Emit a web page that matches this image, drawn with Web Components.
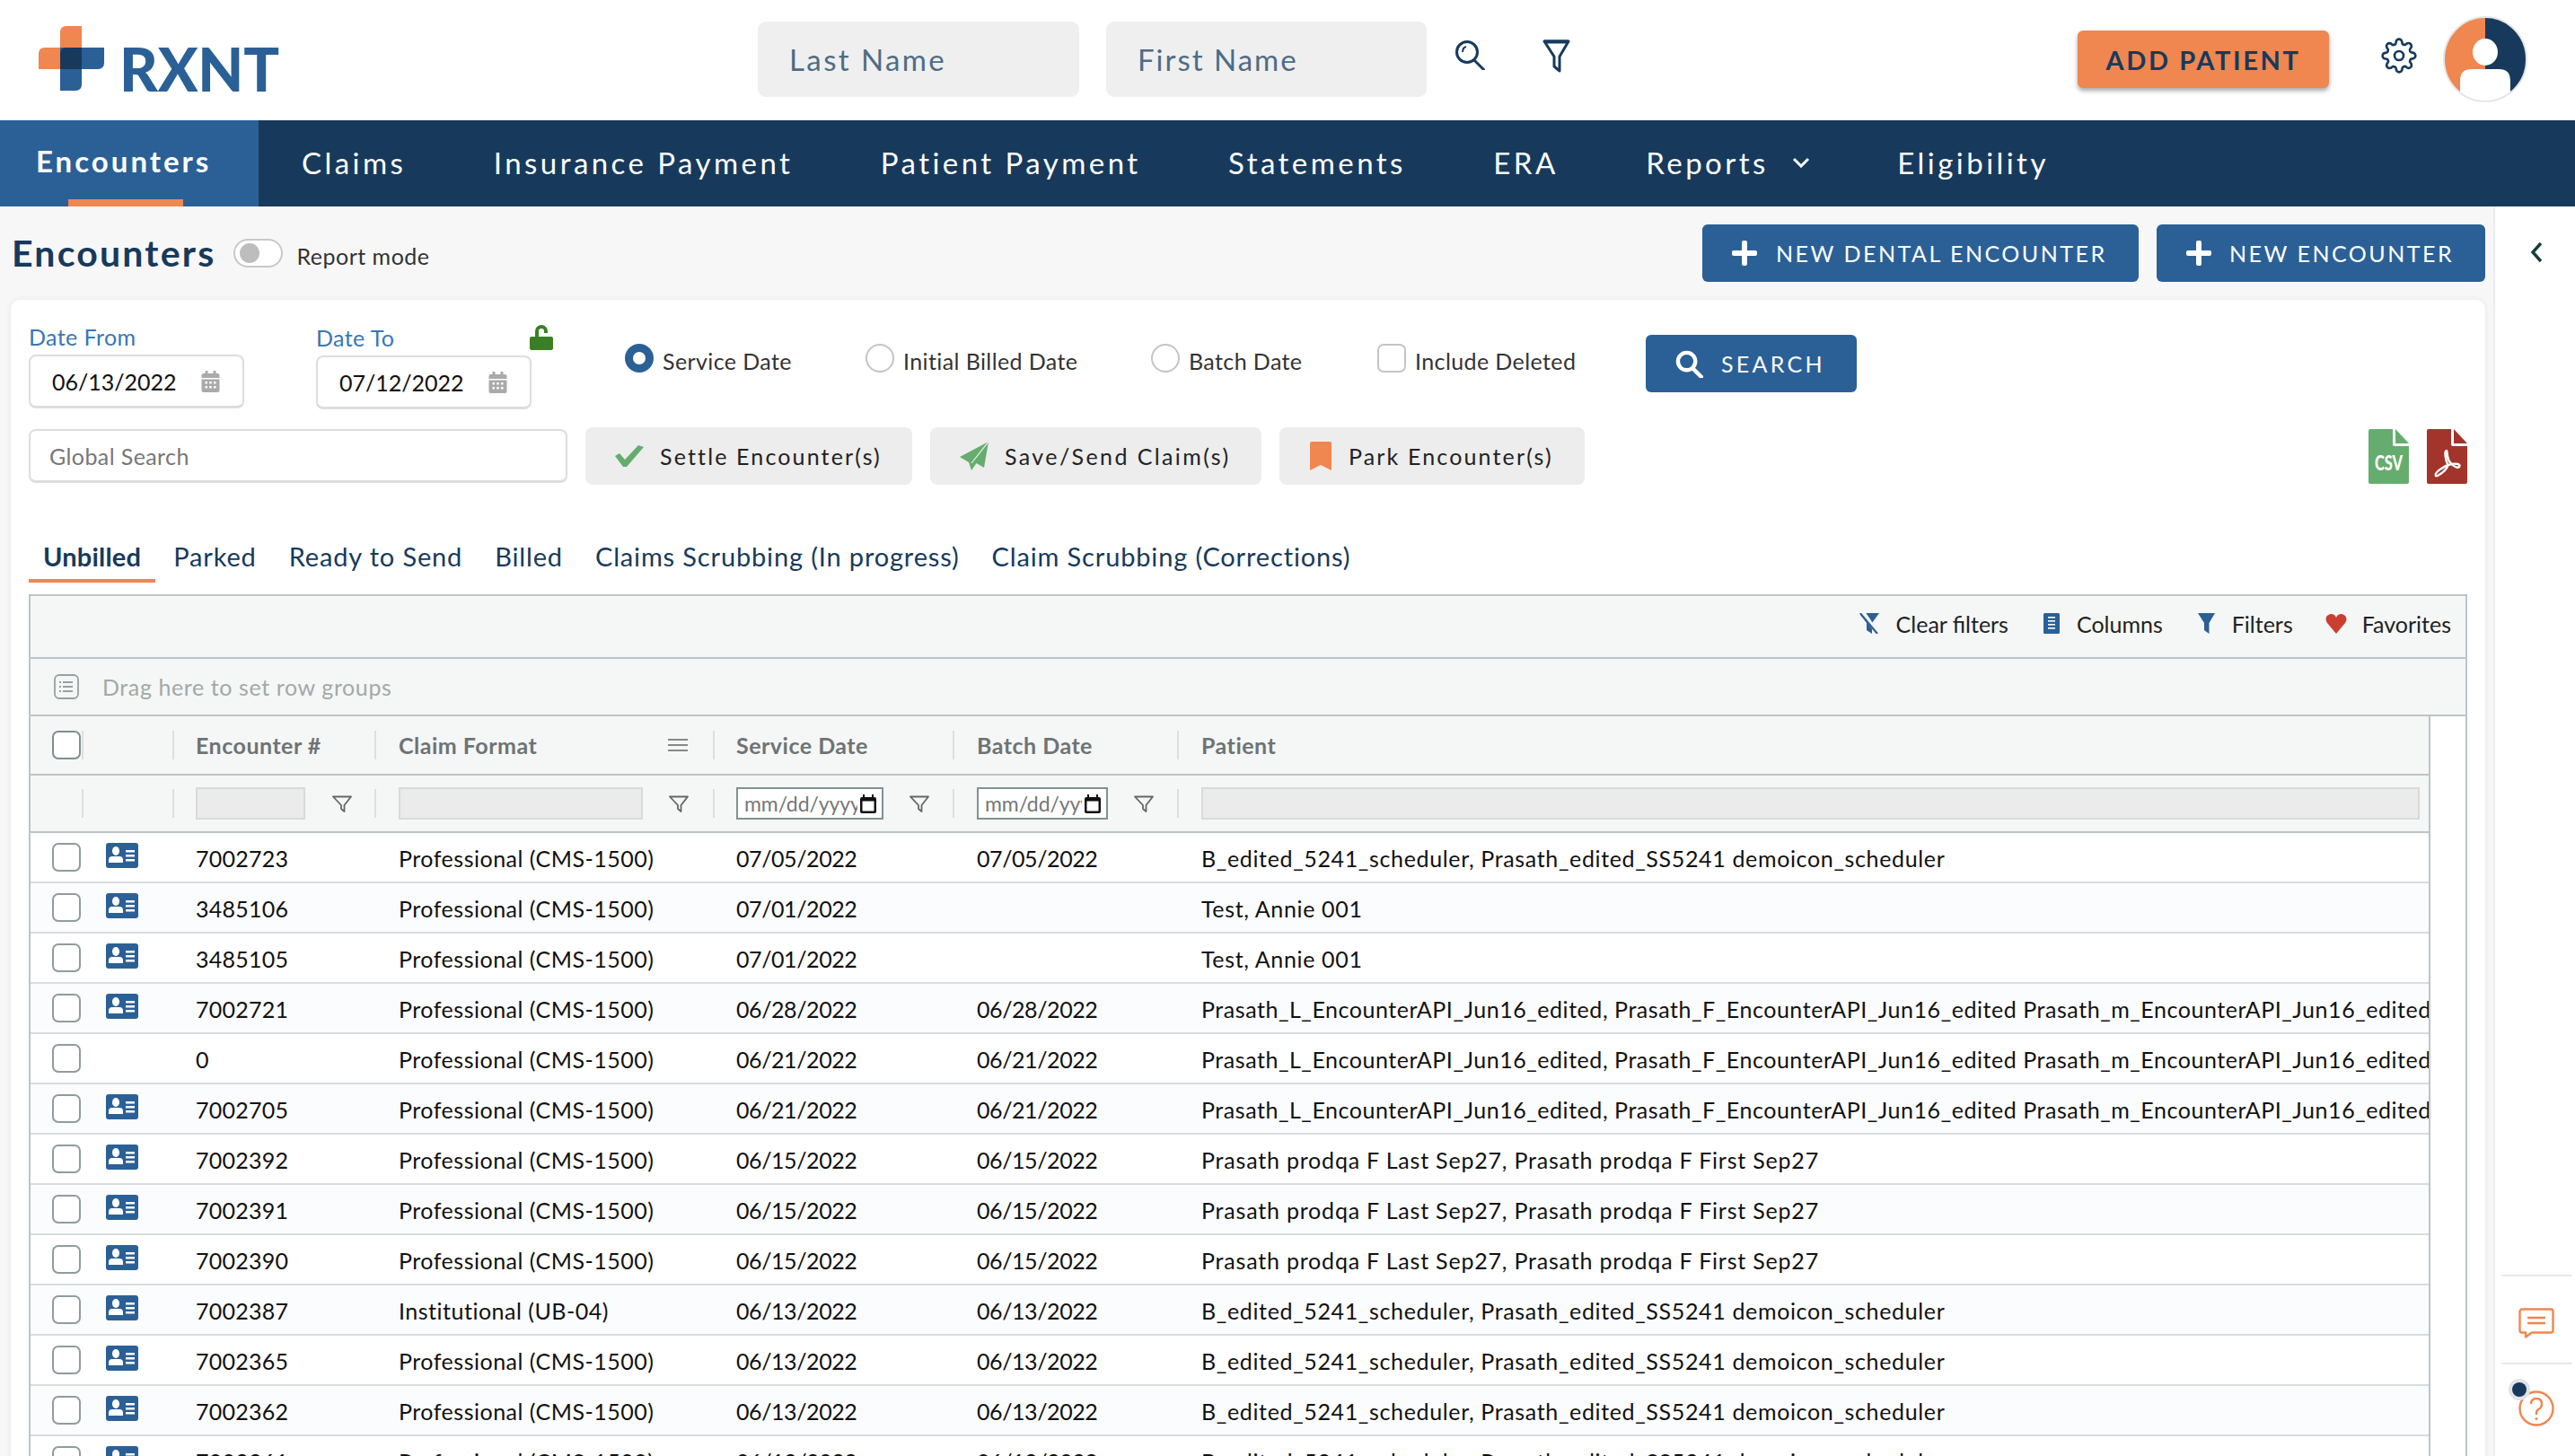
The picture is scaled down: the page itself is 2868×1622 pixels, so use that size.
<!DOCTYPE html>
<html lang="en">
<head>
<meta charset="utf-8">
<title>RXNT Encounters</title>
<style>
  html, body { margin: 0; height: 1622px; overflow: hidden; background: #f7f7f7; }
  body { font-family: Lato, "Noto Sans", sans-serif; color: #111; }
</style>
</head>
<body>
<rx-app></rx-app>
<script>
const NAVY = "#173a5c", BLUE = "#2b6097", ORANGE = "#f08650", GREEN = "#65ad6e";

const ICONS = {
  logo: `<svg viewBox="0 0 73 72"><path fill="${ORANGE}" d="M24 24V7q0-7 7-7h17v48H0V31q0-7 7-7z"/><path fill="${BLUE}" d="M24 24h49v17q0 7-7 7H48v17q0 7-7 7H24z"/><path fill="${NAVY}" d="M31 24h17v24H24V31q0-7 7-7z"/></svg>`,
  search: `<svg viewBox="0 0 34 34" fill="none" stroke="${NAVY}" stroke-width="3"><circle cx="14" cy="14" r="11.5"/><path d="M22 23l11 11" stroke-linecap="round"/><path d="M9 14q0-5 4-6" stroke-width="2"/></svg>`,
  funnel: `<svg viewBox="0 0 31 37" fill="none" stroke="${NAVY}" stroke-width="3" stroke-linejoin="round"><path d="M2 2h27L19 19v16l-6-5V19z"/><path d="M2 2.5h27" stroke-width="4"/></svg>`,
  gear: `<svg viewBox="0 0 24 24" fill="none" stroke="${NAVY}" stroke-width="1.6"><circle cx="12" cy="12" r="3"/><path d="M19.4 15a1.65 1.65 0 0 0 .33 1.82l.06.06a2 2 0 0 1 0 2.83 2 2 0 0 1-2.83 0l-.06-.06a1.65 1.65 0 0 0-1.82-.33 1.65 1.65 0 0 0-1 1.51V21a2 2 0 0 1-2 2 2 2 0 0 1-2-2v-.09A1.65 1.65 0 0 0 9 19.4a1.65 1.65 0 0 0-1.82.33l-.06.06a2 2 0 0 1-2.83 0 2 2 0 0 1 0-2.83l.06-.06a1.65 1.65 0 0 0 .33-1.82 1.65 1.65 0 0 0-1.51-1H3a2 2 0 0 1-2-2 2 2 0 0 1 2-2h.09A1.65 1.65 0 0 0 4.6 9a1.65 1.65 0 0 0-.33-1.82l-.06-.06a2 2 0 0 1 0-2.83 2 2 0 0 1 2.83 0l.06.06a1.65 1.65 0 0 0 1.82.33H9a1.65 1.65 0 0 0 1-1.51V3a2 2 0 0 1 2-2 2 2 0 0 1 2 2v.09a1.65 1.65 0 0 0 1 1.51 1.65 1.65 0 0 0 1.82-.33l.06-.06a2 2 0 0 1 2.83 0 2 2 0 0 1 0 2.83l-.06.06a1.65 1.65 0 0 0-.33 1.82V9a1.65 1.65 0 0 0 1.51 1H21a2 2 0 0 1 2 2 2 2 0 0 1-2 2h-.09a1.65 1.65 0 0 0-1.51 1z"/></svg>`,
  avatar: `<svg viewBox="0 0 94 96"><defs><clipPath id="c"><ellipse cx="47" cy="48" rx="46" ry="47"/></clipPath></defs><g clip-path="url(#c)"><rect width="47" height="96" fill="${ORANGE}"/><rect x="47" width="47" height="96" fill="${NAVY}"/><ellipse cx="47" cy="40" rx="14" ry="15" fill="#fff"/><path d="M19 96V72q0-13 13-13h30q13 0 13 13v24z" fill="#fff"/></g><ellipse cx="47" cy="48" rx="46" ry="47" fill="none" stroke="#e6e6e6" stroke-width="2"/></svg>`,
  plus: `<svg viewBox="0 0 28 28" fill="#fff"><rect x="11" y="0" width="6" height="28" rx="2"/><rect x="0" y="11" width="28" height="6" rx="2"/></svg>`,
  chevdown: `<svg viewBox="0 0 20 12" fill="none" stroke="#fff" stroke-width="3"><path d="M2 2l8 8 8-8"/></svg>`,
  chevleft: `<svg viewBox="0 0 14 24" fill="none" stroke="#123f3c" stroke-width="3.4"><path d="M12 2L3 12l9 10"/></svg>`,
  calendar: `<svg viewBox="0 0 20 24" fill="#aaa"><path d="M4 0h3v3h6V0h3v3h2a2 2 0 0 1 2 2v3H0V5a2 2 0 0 1 2-2h2z"/><path d="M0 9.500h20V22a2 2 0 0 1-2 2H2a2 2 0 0 1-2-2z"/><g fill="#fff"><rect x="4" y="12" width="2.500" height="2.500"/><rect x="8.700" y="12" width="2.500" height="2.500"/><rect x="13.500" y="12" width="2.500" height="2.500"/><rect x="4" y="17" width="2.500" height="2.500"/><rect x="8.700" y="17" width="2.500" height="2.500"/><rect x="13.500" y="17" width="2.500" height="2.500"/></g></svg>`,
  lock: `<svg viewBox="0 0 26 28" fill="#3b7f25"><path d="M2 13h22a2 2 0 0 1 2 2v11a2 2 0 0 1-2 2H2a2 2 0 0 1-2-2V15a2 2 0 0 1 2-2z"/><path d="M6 14V7a7 7 0 0 1 14 0v2h-4V7a3 3 0 0 0-6 0v7z"/></svg>`,
  check: `<svg viewBox="0 0 32 24" fill="${GREEN}"><path d="M0 12l5-3 6 7L26 0l6 2-19 22h-4z"/></svg>`,
  plane: `<svg viewBox="0 0 32 32" fill="${GREEN}"><path d="M32 0L27 29 18.500 24 13 32 10 23 0 17z"/><path d="M32 0L13 24" stroke="#ededed" stroke-width="1.200"/></svg>`,
  bookmark: `<svg viewBox="0 0 24 32" fill="${ORANGE}"><path d="M2 0h20a2 2 0 0 1 2 2v30l-12-6-12 6V2a2 2 0 0 1 2-2z"/></svg>`,
  searchw: `<svg viewBox="0 0 32 32" fill="none" stroke="#fff" stroke-width="4.500"><circle cx="13" cy="13" r="10"/><path d="M20 21l10 10" stroke-linecap="round"/></svg>`,
  csv: `<svg viewBox="0 0 45 61"><path fill="${GREEN}" d="M2 0h25v17q0 2 2 2h16v40a2 2 0 0 1-2 2H2a2 2 0 0 1-2-2V2a2 2 0 0 1 2-2z"/><path fill="${GREEN}" d="M30 0l15 16H30z"/><text x="22.500" y="46" text-anchor="middle" font-family="Lato, sans-serif" font-weight="900" font-size="22" fill="#fff" textLength="31" lengthAdjust="spacingAndGlyphs">CSV</text></svg>`,
  pdf: `<svg viewBox="0 0 45 61"><path fill="#a2342c" d="M2 0h25v17q0 2 2 2h16v40a2 2 0 0 1-2 2H2a2 2 0 0 1-2-2V2a2 2 0 0 1 2-2z"/><path fill="#a2342c" d="M30 0l15 16H30z"/><path fill="none" stroke="#fff" stroke-width="2.400" d="M22 24c-3 0-1 11 1 15 2 5-12 15-13 13-2-3 8-11 17-13 6-1 11 0 9 3-2 3-9-3-11-6-3-5-2-12-3-12z"/></svg>`,
  card: `<svg viewBox="0 0 36 28"><rect width="36" height="28" rx="3" fill="${BLUE}"/><ellipse cx="11" cy="9" rx="4" ry="5" fill="#fff"/><path d="M3 22v-3q0-4 4-4h8q4 0 4 4v3z" fill="#fff"/><g fill="#fff"><rect x="22" y="8" width="10" height="2.500"/><rect x="22" y="13" width="10" height="2.500"/><rect x="22" y="18" width="10" height="2.500"/></g></svg>`,
  clearf: `<svg viewBox="0 0 22 23"><path fill="${BLUE}" d="M0 0h22l-8 11v12l-6-4v-8z"/><path d="M4 -1l17 25" stroke="#f4f7f6" stroke-width="4.500" fill="none"/><path d="M1.500 1L20 23" stroke="${BLUE}" stroke-width="2.200" fill="none"/></svg>`,
  columns: `<svg viewBox="0 0 18 23"><rect width="18" height="23" rx="1.500" fill="${BLUE}"/><g fill="#fff"><rect x="5" y="4" width="8" height="1.600"/><rect x="5" y="8" width="8" height="1.600"/><rect x="5" y="12" width="8" height="1.600"/><rect x="5" y="16" width="8" height="1.600"/></g></svg>`,
  filter: `<svg viewBox="0 0 19 23" fill="${BLUE}"><path d="M0 0h19L12.500 11v12L7 19v-8z"/></svg>`,
  heart: `<svg viewBox="0 0 24 22" fill="#c94033"><path d="M12 22L2 10C-2 4 3 0 6.500 0 9 0 11 1.500 12 4c1-2.500 3-4 5.500-4C21 0 26 4 22 10z"/></svg>`,
  groups: `<svg viewBox="0 0 28 28" fill="none" stroke="#9a9fa0" stroke-width="1.800"><rect x="1" y="1" width="26" height="26" rx="5"/><path d="M10 9h11M10 14h11M10 19h11"/><path d="M6 9h2M6 14h2M6 19h2"/></svg>`,
  menu: `<svg viewBox="0 0 22 14" fill="#888"><rect width="22" height="2"/><rect y="6" width="22" height="2"/><rect y="12" width="22" height="2"/></svg>`,
  ffunnel: `<svg viewBox="0 0 22 19" fill="none" stroke="#666" stroke-width="1.800" stroke-linejoin="round"><path d="M1 1.500h20L13.500 11v7L10 15v-4z"/></svg>`,
  dcal: `<svg viewBox="0 0 18 21"><path d="M3 0h2v3h8V0h2v3h1a2 2 0 0 1 2 2v14a2 2 0 0 1-2 2H2a2 2 0 0 1-2-2V5a2 2 0 0 1 2-2h1z" fill="#111"/><rect x="2.500" y="7.500" width="13" height="11" fill="#fff"/></svg>`,
  chat: `<svg viewBox="0 0 40 34" fill="none" stroke="${ORANGE}" stroke-width="2.400" stroke-linejoin="round"><path d="M4 1.500h32a2.500 2.500 0 0 1 2.500 2.500v21a2.500 2.500 0 0 1-2.500 2.500H15l-7 5v-5H4A2.500 2.500 0 0 1 1.500 25V4A2.500 2.500 0 0 1 4 1.500z"/><path d="M10 11h20M10 17h20"/></svg>`,
  help: `<svg viewBox="0 0 40 40" fill="none" stroke="${ORANGE}" stroke-width="2.400"><circle cx="20" cy="20" r="18.500"/><path d="M14 15q0-6 6-6t6 6q0 4-3 5.500T20 25v2"/><circle cx="20" cy="31.500" r="1.500" fill="${ORANGE}" stroke="none"/></svg>`
};

class RxIcon extends HTMLElement {
  connectedCallback() {
    const w = this.getAttribute("w") || 24, h = this.getAttribute("h") || w;
    this.attachShadow({ mode: "open" }).innerHTML = `
      <style>
        :host { display: inline-block; flex: none; width: ${w}px; height: ${h}px; line-height: 0; }
        svg { width: 100%; height: 100%; display: block; }
      </style>${ICONS[this.getAttribute("name")] || ""}`;
  }
}
customElements.define("rx-icon", RxIcon);

class RxHeader extends HTMLElement {
  constructor() {
    super();
    this.attachShadow({ mode: "open" }).innerHTML = `
    <style>
      :host { display: flex; align-items: center; height: 134px; background: #fff; box-sizing: border-box; padding-left: 43px; }
      .logo { display: flex; align-items: flex-end; width: 801px; height: 72px; margin-top: -4px; }
      .word { font: 900 66px/48px Lato, sans-serif; height: 48px; color: ${BLUE}; margin-left: 17px; letter-spacing: -.2px; }
      .field { width: 358px; height: 84px; box-sizing: border-box; background: #efefef; border-radius: 9px; margin-right: 30px;
        display: flex; align-items: center; padding-left: 35px; color: #4e6c85; font-size: 33px; letter-spacing: 2.400px; margin-top: -2px; }
      .search { margin: -12px 0 0 1px; }
      .funnel { margin: -9px 0 0 64px; }
      .add { margin-left: 565px; width: 280px; height: 64px; border-radius: 6px; background: ${ORANGE}; color: ${NAVY}; font-weight: 700; font-size: 29px; letter-spacing: 2.600px;
        display: flex; align-items: center; justify-content: center; box-shadow: 0 3px 5px rgba(0,0,0,.35); margin-top: -2px; }
      .gear { margin: -10px 0 0 58px; }
      .avatar { margin: -2px 0 0 29px; }
    </style>
    <div class="logo"><rx-icon name="logo" w="73" h="72"></rx-icon><span class="word">RXNT</span></div>
    <div class="field">Last Name</div>
    <div class="field" style="margin-right:0;width:357px;letter-spacing:2px">First Name</div>
    <div style="width:30px"></div>
    <rx-icon class="search" name="search" w="34"></rx-icon>
    <rx-icon class="funnel" name="funnel" w="31" h="37"></rx-icon>
    <div class="add">ADD PATIENT</div>
    <rx-icon class="gear" name="gear" w="40" h="42"></rx-icon>
    <rx-icon class="avatar" name="avatar" w="94" h="96"></rx-icon>`;
  }
}
customElements.define("rx-header", RxHeader);

class RxNav extends HTMLElement {
  constructor() {
    super();
    const items = ["Claims", "Insurance Payment", "Patient Payment", "Statements", "ERA", "Reports", "Eligibility"];
    this.attachShadow({ mode: "open" }).innerHTML = `
    <style>
      :host { display: flex; height: 96px; background: ${NAVY}; color: #fff; font-size: 33px; letter-spacing: 3.450px; }
      .on { width: 288px; box-sizing: border-box; padding-left: 40px; background: ${BLUE}; display: flex; flex-direction: column; justify-content: flex-end; font-weight: 700; letter-spacing: 3.000px; }
      .on span { margin-bottom: 20px; line-height: 44px; }
      .on i { display: block; width: 128px; height: 8px; margin: 1px 0 0 36px; background: ${ORANGE}; }
      .items { display: flex; align-items: center; gap: 97.500px; padding: 0 0 2px 48px; }
      .item { display: flex; align-items: center; gap: 26px; }
    </style>
    <div class="on"><span>Encounters</span><i></i></div>
    <div class="items">${items.map(t => `<div class="item">${t}${t === "Reports" ? '<rx-icon name="chevdown" w="20" h="12"></rx-icon>' : ""}</div>`).join("")}</div>`;
  }
}
customElements.define("rx-nav", RxNav);

class RxSidebar extends HTMLElement {
  constructor() {
    super();
    this.attachShadow({ mode: "open" }).innerHTML = `
    <style>
      :host { display: flex; flex-direction: column; align-items: center; background: #fff; border-left: 2px solid #ececec; box-sizing: border-box; width: 91px; height: 1392px; padding-left: 3px; }
      .top { height: 1190px; padding-top: 39px; box-sizing: border-box; }
      .cell { width: 78px; border-top: 2px solid #e8e8e8; display: flex; justify-content: center; box-sizing: border-box; position: relative; }
      .dot { position: absolute; left: 12px; top: 20px; width: 16px; height: 16px; border-radius: 50%; background: ${NAVY}; box-shadow: 0 0 0 4px #dfe3e8; }
    </style>
    <div class="top"><rx-icon name="chevleft" w="14" h="24"></rx-icon></div>
    <div class="cell" style="height:98px;padding-top:35px"><rx-icon name="chat" w="40" h="34"></rx-icon></div>
    <div class="cell" style="height:100px;padding-top:29px"><rx-icon name="help" w="40" h="40"></rx-icon><span class="dot"></span></div>`;
  }
}
customElements.define("rx-sidebar", RxSidebar);

class EncTitle extends HTMLElement {
  constructor() {
    super();
    this.attachShadow({ mode: "open" }).innerHTML = `
    <style>
      :host { display: flex; align-items: center; height: 104px; padding: 0 9px 0 13px; box-sizing: border-box; }
      h1 { margin: -2px 0 0; font-size: 41px; font-weight: 700; color: ${NAVY}; letter-spacing: 2.200px; }
      .toggle { width: 55px; height: 32px; box-sizing: border-box; margin-left: 20px; border: 2px solid #c8c8c8; border-radius: 16px; background: #fff; padding: 3px 5px; }
      .toggle i { display: block; width: 22px; height: 22px; border-radius: 50%; background: #bdbdbd; }
      .mode { margin: 6px 0 0 15px; font-size: 25px; color: #333; letter-spacing: .5px; }
      .btn { height: 64px; box-sizing: border-box; border-radius: 6px; background: ${BLUE}; color: #fff; display: flex; align-items: center; font-size: 25px; letter-spacing: 2.500px; }
    </style>
    <h1>Encounters</h1>
    <div class="toggle"><i></i></div>
    <div class="mode">Report mode</div>
    <div class="btn" style="margin-left:auto;width:486px;padding-left:33px;gap:21px"><rx-icon name="plus" w="28"></rx-icon>NEW DENTAL ENCOUNTER</div>
    <div class="btn" style="margin-left:20px;width:366px;padding-left:33px;gap:20px"><rx-icon name="plus" w="28"></rx-icon>NEW ENCOUNTER</div>`;
  }
}
customElements.define("enc-title", EncTitle);

class EncFilters extends HTMLElement {
  constructor() {
    super();
    const opts = [["Service Date", 268, "on"], ["Initial Billed Date", 318, ""], ["Batch Date", 252, ""], ["Include Deleted", 299, "box"]];
    this.attachShadow({ mode: "open" }).innerHTML = `
    <style>
      :host { display: block; padding: 26px 20px 0; color: #333; }
      .row { display: flex; align-items: flex-start; }
      .date { width: 240px; margin-right: 80px; }
      .date.to { width: 264px; margin-right: 80px; padding-top: 1px; }
      .lab { display: flex; justify-content: space-between; height: 35px; box-sizing: border-box; padding-bottom: 6px; align-items: center; color: #3a76b5; font-size: 25px; letter-spacing: .4px; }
      .inp { width: 240px; height: 60px; box-sizing: border-box; border: 2px solid #ddd; border-bottom-width: 3px; border-radius: 8px; background: #fff; display: flex; align-items: center; justify-content: space-between; padding: 0 25px 0 24px; color: #111; font-size: 25px; }
      .opts { display: flex; margin-top: 23px; }
      .opt { display: flex; align-items: flex-start; gap: 10px; font-size: 25px; line-height: 38px; letter-spacing: .4px; }
      .mark { width: 32px; height: 32px; box-sizing: border-box; border: 2px solid #c4c4c4; border-radius: 50%; background: #fff; flex: none; }
      .mark.on { border: 9px solid ${BLUE}; }
      .mark.box { border-radius: 7px; }
      .search { width: 235px; height: 64px; box-sizing: border-box; margin-top: 13px; border-radius: 6px; background: ${BLUE}; color: #fff; display: flex; align-items: center; padding-left: 33px; gap: 20px; font-size: 25px; letter-spacing: 3.300px; }
      .row2 { margin-top: 20px; height: 64px; align-items: center; gap: 20px; }
      .global { width: 600px; height: 60px; box-sizing: border-box; border: 2px solid #ddd; border-bottom-width: 3px; border-radius: 8px; background: #fff; display: flex; align-items: center; padding-left: 21px; color: #777; font-size: 25px; letter-spacing: .4px; }
      .act { height: 64px; box-sizing: border-box; background: #ededed; border-radius: 8px; display: flex; align-items: center; font-size: 25px; letter-spacing: 2.150px; color: #222; }
      .docs { margin-left: auto; display: flex; gap: 20px; }
    </style>
    <div class="row">
      <div class="date"><div class="lab">Date From</div><div class="inp">06/13/2022<rx-icon name="calendar" w="21" h="24"></rx-icon></div></div>
      <div class="date to"><div class="lab"><span>Date To</span><rx-icon name="lock" w="26" h="28"></rx-icon></div><div class="inp">07/12/2022<rx-icon name="calendar" w="21" h="24"></rx-icon></div></div>
      <div class="opts">${opts.map(([t, w, c]) => `<div class="opt" style="width:${w}px"><span class="mark ${c}"></span>${t}</div>`).join("")}</div>
      <div class="search"><rx-icon name="searchw" w="31"></rx-icon>SEARCH</div>
    </div>
    <div class="row row2">
      <div class="global">Global Search</div>
      <div class="act" style="width:364px;padding-left:33px;gap:18px"><rx-icon name="check" w="32" h="24"></rx-icon>Settle Encounter(s)</div>
      <div class="act" style="width:369px;padding-left:33px;gap:18px;letter-spacing:2.400px"><rx-icon name="plane" w="32"></rx-icon>Save/Send Claim(s)</div>
      <div class="act" style="width:340px;padding-left:34px;gap:19px"><rx-icon name="bookmark" w="24" h="32"></rx-icon>Park Encounter(s)</div>
      <div class="docs"><rx-icon name="csv" w="45" h="61"></rx-icon><rx-icon name="pdf" w="45" h="61"></rx-icon></div>
    </div>`;
  }
}
customElements.define("enc-filters", EncFilters);

class EncTabs extends HTMLElement {
  constructor() {
    super();
    const tabs = ["Unbilled", "Parked", "Ready to Send", "Billed", "Claims Scrubbing (In progress)", "Claim Scrubbing (Corrections)"];
    this.attachShadow({ mode: "open" }).innerHTML = `
    <style>
      :host { display: flex; gap: 4px; padding: 61px 20px 0; height: 48px; color: ${NAVY}; font-size: 29px; letter-spacing: .85px; }
      .tab { padding: 0 16px; height: 48px; box-sizing: border-box; line-height: 38px; }
      .tab.on { font-weight: 700; letter-spacing: .2px; border-bottom: 4px solid ${ORANGE}; }
    </style>
    ${tabs.map((t, i) => `<div class="tab ${i ? "" : "on"}">${t}</div>`).join("")}`;
  }
}
customElements.define("enc-tabs", EncTabs);

const PROF = "Professional (CMS-1500)";
const SCHED = "B_edited_5241_scheduler, Prasath_edited_SS5241 demoicon_scheduler";
const API = "Prasath_L_EncounterAPI_Jun16_edited, Prasath_F_EncounterAPI_Jun16_edited Prasath_m_EncounterAPI_Jun16_edited";
const PRODQA = "Prasath prodqa F Last Sep27, Prasath prodqa F First Sep27";
const ROWS = [
  ["7002723", PROF, "07/05/2022", "07/05/2022", SCHED],
  ["3485106", PROF, "07/01/2022", "", "Test, Annie 001"],
  ["3485105", PROF, "07/01/2022", "", "Test, Annie 001"],
  ["7002721", PROF, "06/28/2022", "06/28/2022", API],
  ["0", PROF, "06/21/2022", "06/21/2022", API],
  ["7002705", PROF, "06/21/2022", "06/21/2022", API],
  ["7002392", PROF, "06/15/2022", "06/15/2022", PRODQA],
  ["7002391", PROF, "06/15/2022", "06/15/2022", PRODQA],
  ["7002390", PROF, "06/15/2022", "06/15/2022", PRODQA],
  ["7002387", "Institutional (UB-04)", "06/13/2022", "06/13/2022", SCHED],
  ["7002365", PROF, "06/13/2022", "06/13/2022", SCHED],
  ["7002362", PROF, "06/13/2022", "06/13/2022", SCHED],
  ["7002361", PROF, "06/13/2022", "06/13/2022", SCHED]
];

class EncGrid extends HTMLElement {
  constructor() {
    super();
    const funnel = '<rx-icon name="ffunnel" w="22" h="19"></rx-icon>';
    const datebox = w => `<div class="dbox" style="width:${w}px"><span>mm/dd/yyyy</span><rx-icon name="dcal" w="18" h="21"></rx-icon></div>`;
    const line = (cells) => cells.map(c => `<div class="c">${c}</div>`).join("");
    const spacing = p => p === API ? .55 : p === PRODQA ? .8 : .65;
    this.attachShadow({ mode: "open" }).innerHTML = `
    <style>
      :host { display: block; margin: 13px 20px 0; border: 2px solid #bcc4c8; border-bottom: 0; background: #fff; font-size: 25px; letter-spacing: .25px; }
      .tool { height: 70px; box-sizing: border-box; padding: 0 16px 7px 0; background: #f4f7f6; border-bottom: 2px solid #bcc4c8; display: flex; align-items: center; justify-content: flex-end; color: #222; letter-spacing: 0; }
      .tool div { display: flex; align-items: center; gap: 19px; margin-left: 39px; }
      .drag { height: 62px; background: #f4f7f6; border-bottom: 2px solid #bcc4c8; display: flex; align-items: center; padding-left: 26px; gap: 26px; color: #a3a8a8; letter-spacing: .6px; }
      .body { margin-right: 39px; border-right: 2px solid #bcc4c8; }
      .r { display: grid; grid-template-columns: 59px 101px 225px 377px 267px 250px 1fr; box-sizing: border-box; border-bottom: 2px solid #bcc4c8; background-color: #f4f7f6; }
      .c { display: flex; align-items: center; padding-left: 24px; min-width: 0; overflow: hidden; white-space: nowrap; box-sizing: border-box; }
      .c:nth-child(4), .c:nth-child(6), .c:nth-child(7) { padding-left: 25px; }
      .c:not(:last-child) { background: linear-gradient(#dcdfe0, #dcdfe0) right center / 2px 32px no-repeat; }
      .head { height: 66px; color: #6e7375; font-weight: 700; letter-spacing: .5px; }
      .filt { height: 64px; }
      .data { height: 56px; background: #fff; border-bottom-color: #d9dcde; color: #111; }
      .data:nth-child(even) { background: #fbfcfe; }
      .data .c { background: none; }
      .data .c:nth-child(n+3) { padding-top: 2px; }
      .data .c:nth-child(4) { letter-spacing: .5px; }
      .data .c:nth-child(5), .data .c:nth-child(6) { letter-spacing: -.42px; }
      .box { width: 32px; height: 32px; box-sizing: border-box; border: 2px solid #7f8f90; border-radius: 7px; background: #fff; flex: none; }
      .data .box { border-color: #8f9c9d; }
      .inp { height: 36px; box-sizing: border-box; background: #ebebeb; border: 2px solid #d8dada; flex: none; }
      .dbox { height: 36px; box-sizing: border-box; background: #fff; border: 2px solid #7f9294; display: flex; align-items: center; justify-content: space-between; gap: 3px; padding: 0 6px 0 7px; color: #777; font-size: 23px; letter-spacing: -.1px; flex: none; overflow: hidden; }
      .dbox span { overflow: hidden; min-width: 0; }
    </style>
    <div class="tool">
      <div><rx-icon name="clearf" w="22" h="23"></rx-icon>Clear filters</div>
      <div><rx-icon name="columns" w="18" h="23"></rx-icon>Columns</div>
      <div><rx-icon name="filter" w="19" h="23"></rx-icon>Filters</div>
      <div style="margin-left:36px;gap:17px"><rx-icon name="heart" w="24" h="22"></rx-icon>Favorites</div>
    </div>
    <div class="drag"><rx-icon name="groups" w="28"></rx-icon>Drag here to set row groups</div>
    <div class="body">
      <div class="r head">${line(['<span class="box"></span>', "", "Encounter #", 'Claim Format<rx-icon name="menu" w="22" h="14" style="margin-left:auto;margin-right:30px"></rx-icon>', "Service Date", "Batch Date", "Patient"])}</div>
      <div class="r filt">${line(["", "",
        `<span class="inp" style="width:122px"></span><span style="width:30px"></span>${funnel}`,
        `<span class="inp" style="width:272px"></span><span style="width:29px"></span>${funnel}`,
        `${datebox(164)}<span style="width:29px"></span>${funnel}`,
        `${datebox(146)}<span style="width:29px"></span>${funnel}`,
        '<span class="inp" style="flex:1;margin-right:10px"></span>'])}</div>
      ${ROWS.map(r => `<div class="r data">${line([
        '<span class="box"></span>',
        r[0] === "0" ? "" : '<rx-icon name="card" w="36" h="28" style="margin:-4px 0 0 1px"></rx-icon>',
        r[0], r[1], r[2], r[3],
        `<span style="letter-spacing:${spacing(r[4])}px">${r[4]}</span>`])}</div>`).join("")}
    </div>`;
  }
}
customElements.define("enc-grid", EncGrid);

class RxApp extends HTMLElement {
  constructor() {
    super();
    this.attachShadow({ mode: "open" }).innerHTML = `
    <style>
      :host { display: block; height: 1622px; overflow: hidden; }
      main { display: flex; }
      .page { width: 2777px; flex: none; box-sizing: border-box; }
      .card { margin: 0 9px 0 12px; height: 1400px; background: #fff; border-radius: 10px 10px 0 0; box-shadow: 0 0 6px rgba(0,0,0,.07); }
    </style>
    <rx-header></rx-header>
    <rx-nav></rx-nav>
    <main>
      <div class="page">
        <enc-title></enc-title>
        <div class="card">
          <enc-filters></enc-filters>
          <enc-tabs></enc-tabs>
          <enc-grid></enc-grid>
        </div>
      </div>
      <rx-sidebar></rx-sidebar>
    </main>`;
  }
}
customElements.define("rx-app", RxApp);
</script>
</body>
</html>
